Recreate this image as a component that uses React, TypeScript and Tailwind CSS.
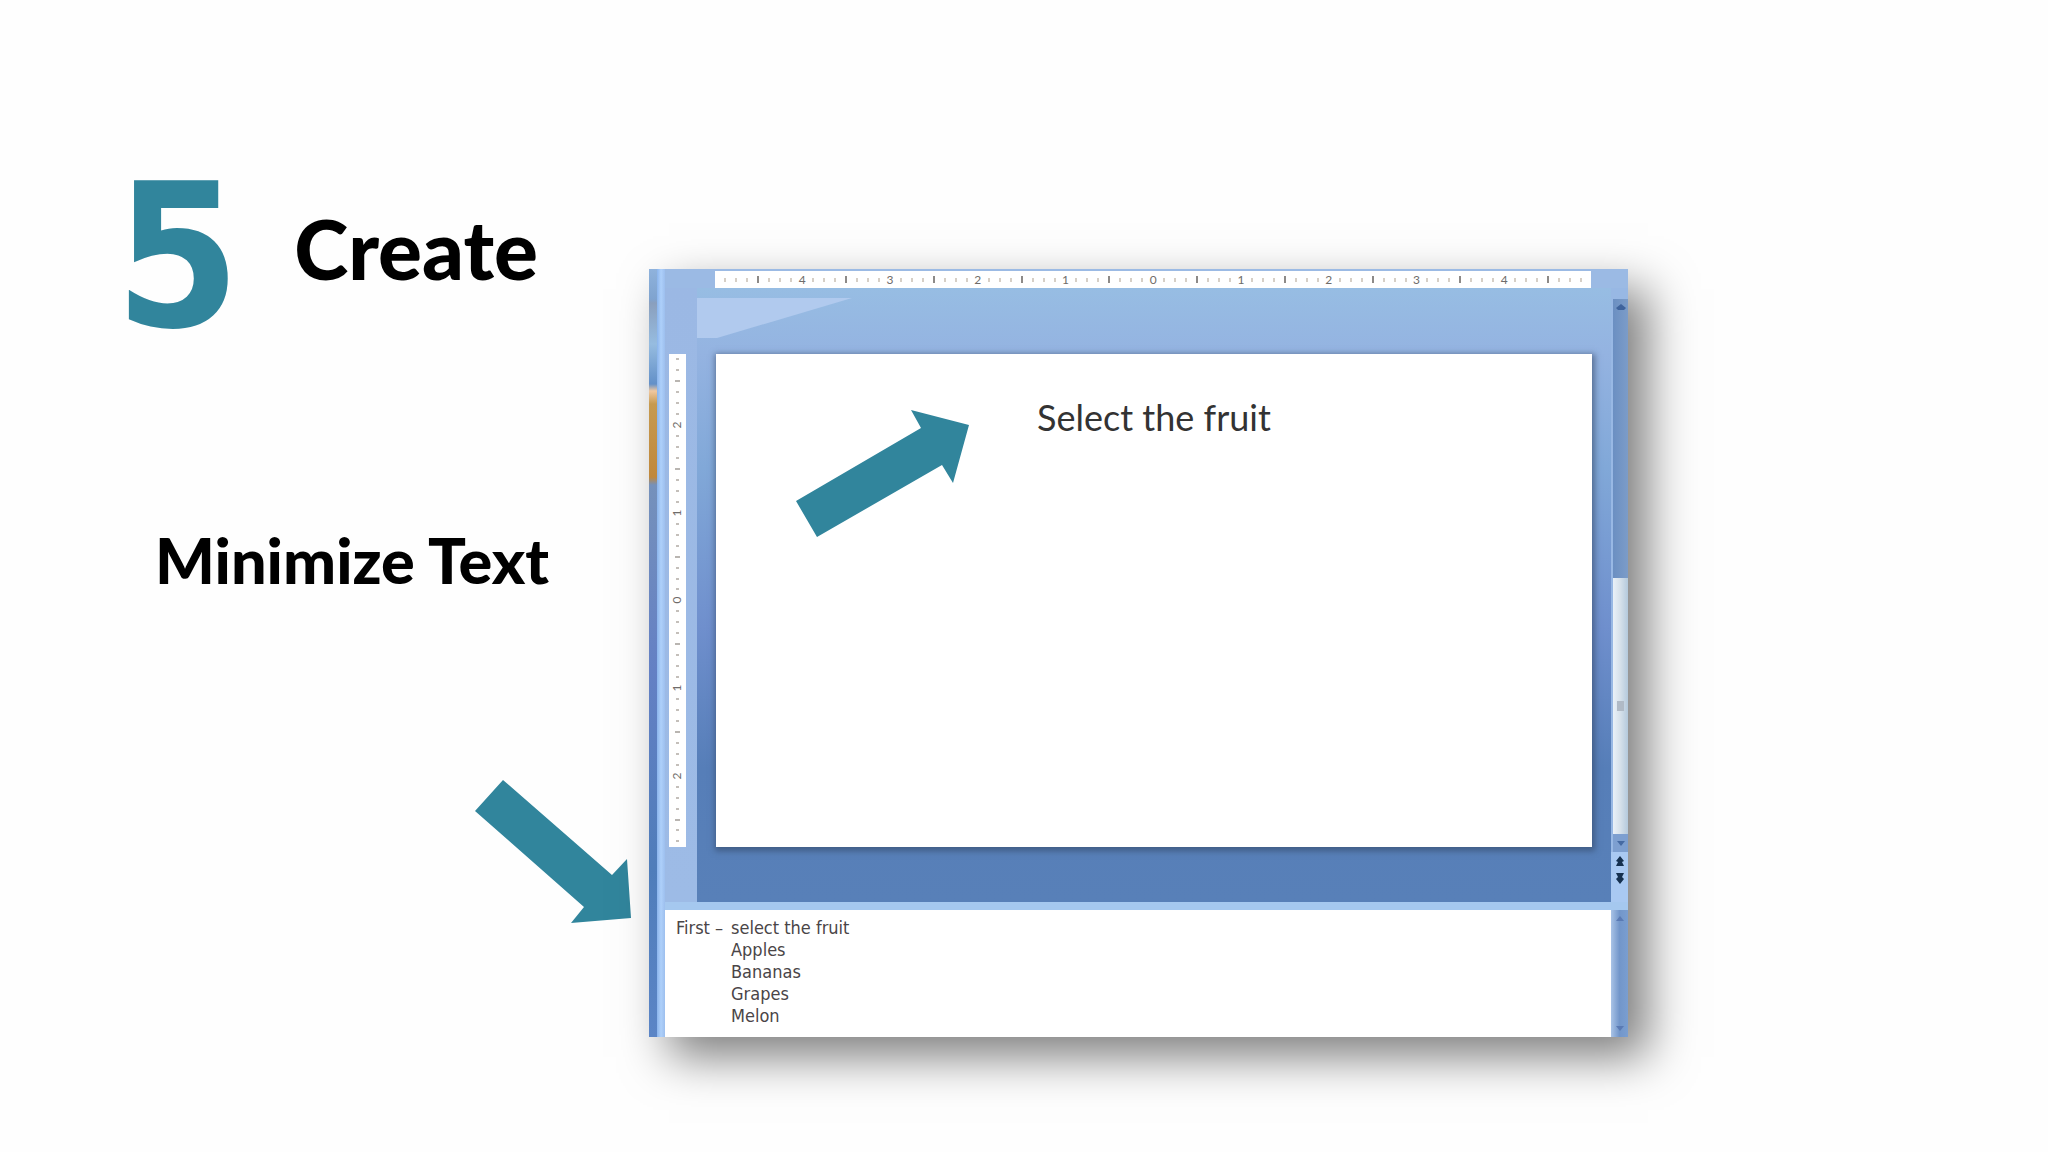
import React from 'react';
import clsx from 'clsx';

const notes = ['Apples', 'Bananas', 'Grapes', 'Melon'];

// One cell per 1/8 inch, a number on every full inch
const Ruler: React.FC<{ cells: number; vertical?: boolean }> = ({ cells, vertical }) => {
  const middle = (cells - 1) / 2;

  return (
    <div
      className={clsx(
        'flex bg-white text-xs leading-none text-[#6f6c6a]',
        vertical ? 'flex-1 flex-col w-[17px]' : 'h-[17px] px-[5px]'
      )}
    >
      {Array.from({ length: cells }, (_, i) => {
        const step = Math.abs(i - middle);
        const half = step % 4 === 0;
        return (
          <div key={i} className="flex flex-1 min-w-0 min-h-0 items-center justify-center">
            {step % 8 === 0 ? (
              <span className={clsx(vertical && '-rotate-90')}>{step / 8}</span>
            ) : (
              <i
                className={clsx(
                  vertical && (half ? 'h-[2px] w-[5px] bg-[#b9b5b1]' : 'h-[2px] w-[3px] bg-[#c4bfba]'),
                  !vertical && (half ? 'h-[7px] w-[2px] bg-[#8d8a88]' : 'h-[4px] w-[2px] bg-[#d6cfc6]')
                )}
              />
            )}
          </div>
        );
      })}
    </div>
  );
};

const ScrollBar: React.FC = () => (
  <div className="flex flex-col w-[17px] pt-[11px] bg-[#98b8e4]">
    <div className="flex flex-[278] flex-col items-center ml-[2px] pt-[5px] bg-linear-to-r from-[#6b8fc2] to-[#7c9cc8]">
      <svg className="w-[10px] h-[6px]" viewBox="0 0 10 6">
        <path d="M5 0L10 4L8 6H2L0 4Z" fill="#3f639c" />
      </svg>
    </div>
    <div className="flex flex-[259] items-center justify-center ml-[2px] bg-linear-to-r from-[#eaf1f8] via-[#d5e0ea] to-[#b4c9dc]">
      <div className="w-[7px] h-[10px] bg-[#b0bac6]" />
    </div>
    <div className="flex items-center justify-center h-[18px] ml-[2px] bg-[#7d9fd0]">
      <svg className="w-[8px] h-[6px]" viewBox="0 0 8 6">
        <path d="M0 1H8L4 6Z" fill="#456aa3" />
      </svg>
    </div>
    <div className="flex items-start justify-center h-[50px] pt-[4px] bg-[#a9c9f2]">
      <svg className="w-[10px] h-[28px]" viewBox="0 0 10 28" fill="#15304f">
        <path d="M5 0L9 5L7 6L9 10H1L3 6L1 5ZM1 17H9L7 21L9 23L5 28L1 23L3 21Z" />
      </svg>
    </div>
  </div>
);

const Editor: React.FC = () => (
  <div className="flex flex-1 min-w-0 shadow-[20px_20px_44px_rgba(0,0,0,0.5)]">
    <div className="w-[8px] bg-[linear-gradient(#8fb2dc_0px,#7fa3cf_30px,#8a9fbd_34px,#96bce0_75px,#6390c8_115px,#f0c8a0_122px,#c69a50_135px,#c0883c_208px,#7591bb_216px,#6480c4_400px,#4f7dba_600px,#5b85c6_100%)]" />
    <div className="w-[8px] bg-linear-to-r from-[#8ab4ec] via-[#aed0fa] to-[#9dbfee]" />

    <div className="flex-1 min-w-0 bg-[#9bbae4]">
      <div className="pt-[2px] pl-[50px] pr-[37px]">
        <Ruler cells={79} />
      </div>

      <div className="flex">
        <div className="flex flex-col w-[32px] pt-[66px] pb-[55px] pl-[4px] bg-linear-to-b from-[#9bb8e4] to-[#9dbbe6]">
          <Ruler cells={45} vertical />
        </div>

        <div className="flex-1 pt-[10px] pb-[55px] bg-[linear-gradient(#97bde3_0px,#94b3e1_66px,#81a8d8_180px,#6f8fcd_340px,#567eb8_480px,#5880b8_100%)]">
          <svg className="w-[155px] h-[40px] mb-[16px]" viewBox="0 0 155 40">
            <path d="M0 0H155L20 40H0Z" fill="#b1caee" />
          </svg>
          <div className="relative aspect-video mx-[19px] pt-[45px] bg-white shadow-[1px_2px_6px_2px_rgba(50,70,100,0.6)]">
            <h3 className="text-center text-4xl leading-none text-[#333]">Select the fruit</h3>
            <svg className="absolute left-[80px] top-[56px] w-[173px] h-[127px]" viewBox="796 410 173 127">
              <path d="M796 501L921 428L911 410L969 425L953 483L942 465L817 537Z" fill="#31859c" />
            </svg>
          </div>
        </div>

        <ScrollBar />
      </div>

      <div className="h-[8px] bg-[#a5c8ef]" />

      <div className="flex">
        <div className="flex-1 pt-[7px] pb-[10px] pl-[11px] bg-white text-lg leading-[22px] text-[#4a4547] font-['DejaVu_Sans_Condensed','DejaVu_Sans',sans-serif]">
          <div className="flex">
            <p className="w-[55px] whitespace-nowrap">First –</p>
            <p>select the fruit</p>
          </div>
          <ul className="pl-[55px]">
            {notes.map((note) => (
              <li key={note}>{note}</li>
            ))}
          </ul>
        </div>
        <div className="flex flex-col items-center justify-between w-[17px] py-[6px] bg-linear-to-r from-[#a9c3e6] via-[#7296ca] to-[#7a9ed0]">
          <svg className="w-[8px] h-[6px]" viewBox="0 0 8 6">
            <path d="M4 0L8 5H0Z" fill="#5a7ab4" />
          </svg>
          <svg className="w-[8px] h-[6px]" viewBox="0 0 8 6">
            <path d="M0 1H8L4 6Z" fill="#5a7ab4" />
          </svg>
        </div>
      </div>
    </div>
  </div>
);

const App: React.FC = () => {
  return (
    <main className="flex items-start min-h-screen bg-[#fefefe] text-black font-[Lato,sans-serif]">
      <section className="shrink-0 w-[649px] pt-[157px]">
        <header className="flex items-start gap-[54px] pl-[115px] leading-none">
          <span className="text-[200px] leading-none font-bold text-[#31859c] font-['DejaVu_Sans_Condensed','DejaVu_Sans',sans-serif]">
            5
          </span>
          <h1 className="pt-[50px] text-[82px] leading-none font-black">Create</h1>
        </header>
        <h2 className="pt-[171px] pl-[155px] text-[63px] leading-none font-black">Minimize Text</h2>
        <svg className="w-[156px] h-[143px] mt-[189px] ml-[475px]" viewBox="475 780 156 143">
          <path d="M503 780L612 875L627 859L631 918L571 923L584 907L475 811Z" fill="#31859c" />
        </svg>
      </section>

      <section className="flex flex-1 min-w-0 mt-[269px] mr-[420px]">
        <Editor />
      </section>
    </main>
  );
};

export default App;
